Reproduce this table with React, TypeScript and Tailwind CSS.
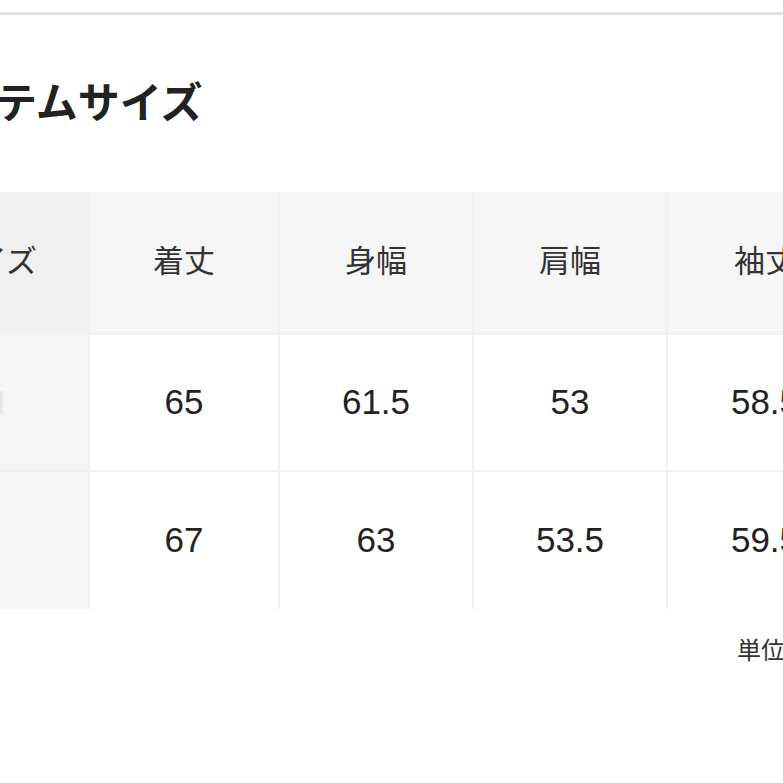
import React from "react";

const font = { fontFamily: '"Liberation Sans", "Noto Sans CJK JP", sans-serif' };

const headers = ["着丈", "身幅", "肩幅", "袖丈"];
const rows = [
  { label: "M", values: ["65", "61.5", "53", "58.5"] },
  { label: "L", values: ["67", "63", "53.5", "59.5"] },
];

export default function App() {
  return (
    <div className="w-[783px] h-[783px] overflow-hidden bg-white text-[#222]" style={font}>
      <div className="h-[12px]" />
      <div className="h-[3px] w-full bg-[#e0e0e0]" />
      <div className="ml-[-106px] w-[1000px]">
        <h2 className="mt-[68px] pl-[20px] text-[42px] leading-[42px] font-bold text-[#222] whitespace-nowrap">
          アイテムサイズ
        </h2>
        <div className="mt-[67px] grid grid-cols-[194px_188px_192px_192px_194px] gap-[2px] bg-[#f0f0f0] w-[968px]">
          <div className="h-[141px] bg-[#efefef] flex items-center justify-center text-[31px] text-[#333]">
            サイズ
          </div>
          {headers.map((h) => (
            <div key={h} className="h-[141px] bg-[#f5f5f5] flex items-center justify-center text-[31px] text-[#333]">
              {h}
            </div>
          ))}
          {rows.map((r, i) => (
            <React.Fragment key={r.label}>
              <div
                className={`${i === 0 ? "h-[135px]" : "h-[137px]"} bg-[#f5f5f5] flex items-center justify-center text-[34px] text-[#e4e4e4]`}
              >
                {r.label}
              </div>
              {r.values.map((v, j) => (
                <div
                  key={j}
                  className={`${i === 0 ? "h-[135px]" : "h-[137px]"} bg-white flex items-center justify-center text-[35px] text-[#222]`}
                >
                  {v}
                </div>
              ))}
            </React.Fragment>
          ))}
        </div>
        <div className="mt-[30px] pl-[843px] text-[24px] leading-[24px] text-[#333] whitespace-nowrap">
          単位：cm
        </div>
      </div>
    </div>
  );
}
